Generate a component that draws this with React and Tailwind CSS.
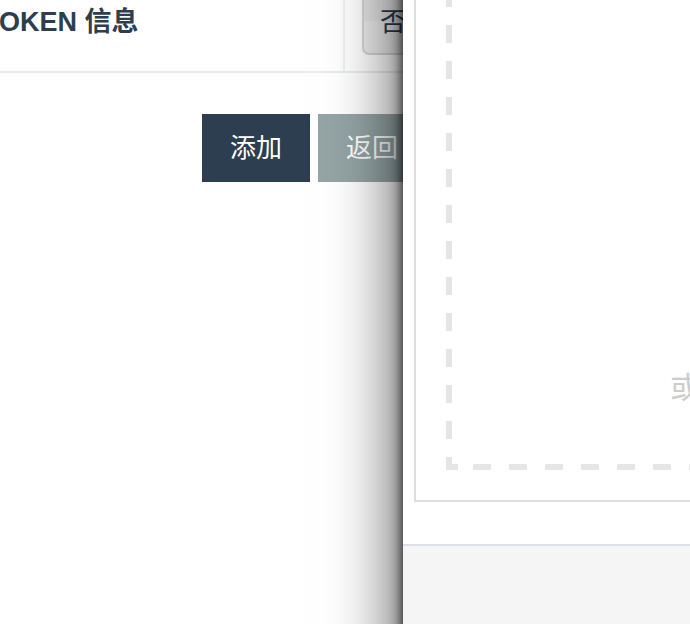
export default function App() {
  return (
    <div className="relative h-[624px] w-[690px] overflow-hidden bg-white font-['Liberation_Sans','Noto_Sans_CJK_SC',sans-serif]">
      {/* form behind the drawer */}
      <div className="ml-[-17px] w-[520px]">
        <div className="flex h-[73px] border-b-2 border-[#e8ecee]">
          <div className="w-[362px] shrink-0 border-r-2 border-[#eef1f2] pt-[7px] text-[27px] font-bold leading-[30px] text-[#2c3e50]">
            TOKEN 信息
          </div>
          <div className="pl-[17px]">
            <div className="mt-[-25px] h-[80px] w-[110px] rounded-[7px] border-2 border-[#cfd6dd] bg-[linear-gradient(#e6e6e6,#e6e6e6_58%,#ededed_58%,#ededed)] px-[16px] pt-[30px] text-[26px] leading-[30px] text-[#2c3e50]">
              否
            </div>
          </div>
        </div>
        <div className="flex gap-2 pl-[219px] pt-[41px]">
          <button className="flex h-[68px] w-[108px] items-center justify-center bg-[#2c3e50] text-[26px] text-white">
            添加
          </button>
          <button className="flex h-[68px] w-[108px] items-center justify-center bg-[#95a5a6] text-[26px] text-white">
            返回
          </button>
        </div>
      </div>

      {/* drawer */}
      <div className="absolute bottom-[-100px] left-[403px] right-0 top-[-100px] flex flex-col bg-white shadow-[0_0_12px_rgba(0,0,0,0.9),-10px_0_60px_rgba(0,0,0,0.6)]">
        <div className="flex h-[644px] shrink-0 flex-col justify-end pb-[42px] pl-[11px]">
          <div className="h-[562px] w-[600px] border-2 border-[#dddddd] p-[30px]">
            <div className="h-full p-[6px] [background:linear-gradient(#e5e5e5,#e5e5e5)_left_bottom/12px_6px_no-repeat,repeating-linear-gradient(to_bottom,transparent_0_17px,#e5e5e5_17px_35px,transparent_35px_36px)_left_top/6px_100%_no-repeat,repeating-linear-gradient(to_right,#e5e5e5_0_9px,transparent_9px_27px,#e5e5e5_27px_36px)_left_bottom/100%_6px_no-repeat]">
              <div className="pl-[218px] pt-[390px] text-[30px] leading-[40px] text-[#cccccc]">
                或 点击选择文件
              </div>
            </div>
          </div>
        </div>
        <div className="flex-1 border-t-2 border-[#dde1e5] bg-[#f5f5f5]" />
      </div>
    </div>
  );
}
